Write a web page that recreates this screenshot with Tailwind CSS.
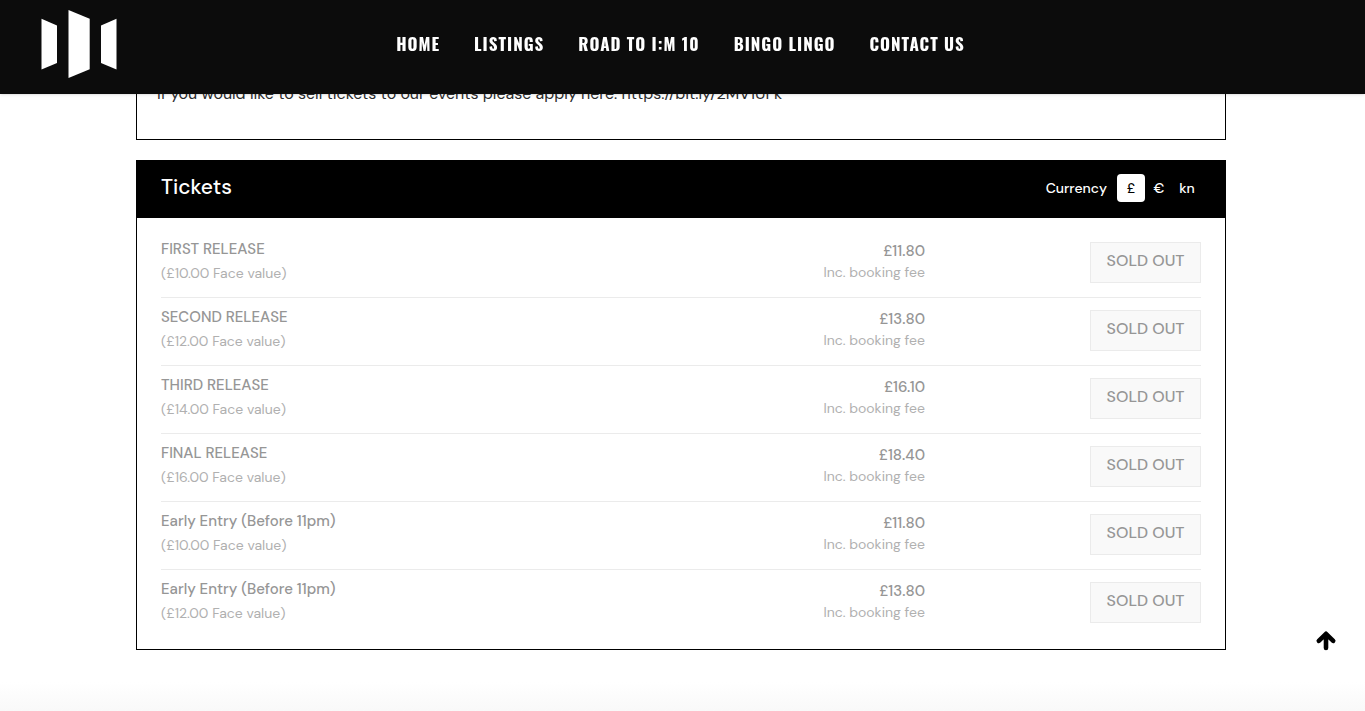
<!DOCTYPE html>
<html lang="en">
<head>
  <meta charset="UTF-8">
  <meta name="viewport" content="width=device-width, initial-scale=1.0">
  <title>Tickets</title>
  <script src="https://cdn.jsdelivr.net/npm/@tailwindcss/browser@4"></script>
</head>
<body class="bg-white font-['DM_Sans','Lato','Liberation_Sans',sans-serif] text-[#2b2b2b]">
  <header class="fixed inset-x-0 top-0 z-10 grid h-[94px] grid-cols-[1fr_auto_1fr] bg-[#0c0c0c] pl-10 pr-11 shadow-sm">
    <a href="#" aria-label="Home" class="mt-2 justify-self-start">
      <svg class="h-[72px] w-[78px]" viewBox="0 0 78 72" fill="#fff">
        <path d="M1.5 10.8 17 17.5V55L1.5 61.4Z"/>
        <path d="M28.5 2 49.7 10.8V61.2L28.5 70Z"/>
        <path d="M76.5 10.8 61 17.5V55L76.5 61.4Z"/>
      </svg>
    </a>
    <nav class="flex h-[88px] items-center gap-[34px] font-['Oswald','Liberation_Sans_Narrow',sans-serif] text-[17px] font-bold tracking-[1px] text-white">
      <a href="#">HOME</a>
      <a href="#">LISTINGS</a>
      <a href="#">ROAD TO I:M 10</a>
      <a href="#">BINGO LINGO</a>
      <a href="#">CONTACT US</a>
    </nav>
  </header>

  <main class="mx-auto flex max-w-[1093px] flex-col gap-5 pr-[3px] pt-15">
    <section class="border-x border-b border-black px-5 pb-[33px] pt-[22px]">
      <p class="text-base leading-6">If you would like to sell tickets to our events please apply here: https://bit.ly/2MV1UFk</p>
    </section>

    <section class="border border-black">
      <div class="flex h-[57px] items-center justify-between bg-black px-6 pb-1 text-white">
        <h2 class="text-[21px] font-medium">Tickets</h2>
        <div class="flex items-center text-sm font-medium">
          <span class="mr-[10px]">Currency</span>
          <button class="size-7 rounded-sm bg-white text-black">£</button>
          <button class="size-7">€</button>
          <button class="size-7">kn</button>
        </div>
      </div>

      <div class="px-6 pb-[11px] pt-3">
        <table class="w-full border-separate border-spacing-0 text-[15px] text-[#969696]">
          <tbody id="tickets"></tbody>
        </table>
      </div>
    </section>
  </main>

  <div class="mt-8 h-[29px] bg-linear-to-b from-white to-[#f9f9f9]"></div>

  <button aria-label="Back to top" class="fixed bottom-[59px] right-7 z-10">
    <svg class="size-[22px]" viewBox="0 0 22 22" fill="none" stroke="#000" stroke-width="4.6" stroke-linecap="round" stroke-linejoin="round">
      <path d="M11 18V5M3.800 10.800 11 3.800 18.200 10.800"/>
    </svg>
  </button>

  <script>
    const tickets = [
      { name: 'FIRST RELEASE', face: '£10.00', price: '£11.80' },
      { name: 'SECOND RELEASE', face: '£12.00', price: '£13.80' },
      { name: 'THIRD RELEASE', face: '£14.00', price: '£16.10' },
      { name: 'FINAL RELEASE', face: '£16.00', price: '£18.40' },
      { name: 'Early Entry (Before 11pm)', face: '£10.00', price: '£11.80' },
      { name: 'Early Entry (Before 11pm)', face: '£12.00', price: '£13.80' },
    ];

    document.getElementById('tickets').innerHTML = tickets.map(t => `
      <tr class="group h-[68px] align-top">
        <td class="border-b border-[#ebebeb] pt-[7px] group-last:border-transparent">
          <div class="font-medium leading-6">${t.name}</div>
          <div class="text-sm leading-6 text-[#b0b0b0]">(${t.face} Face value)</div>
        </td>
        <td class="border-b border-[#ebebeb] pt-[10px] text-right group-last:border-transparent">
          <div class="font-medium leading-[22px]">${t.price}</div>
          <div class="text-sm leading-5 text-[#b0b0b0]">Inc. booking fee</div>
        </td>
        <td class="w-[276px] border-b border-[#ebebeb] pt-3 text-right group-last:border-transparent">
          <button disabled class="h-[41px] w-[111px] border border-[#ebebeb] bg-[#f9f9f9] pb-[3px] text-base font-medium">SOLD OUT</button>
        </td>
      </tr>
    `).join('');
  </script>
</body>
</html>
